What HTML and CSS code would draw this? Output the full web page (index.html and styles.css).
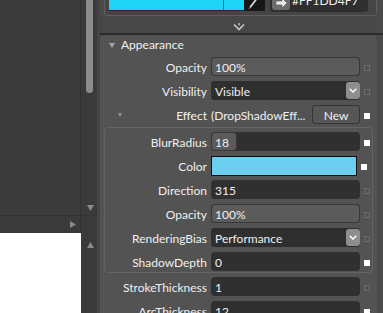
FILE: index.html
```html
<!DOCTYPE html>
<html>
<head>
<meta charset="utf-8">
<link rel="stylesheet" href="styles.css">
</head>
<body>
<div class="app">
  <div class="left">
    <div class="viewport"></div>
    <div class="vscroll">
      <div class="thumb"></div>
      <svg class="arr-down" width="7" height="6" viewBox="0 0 7 6"><polygon points="0,0 7,0 3.5,6" fill="#8a8a8a"/></svg>
    </div>
    <div class="hscroll">
      <svg width="6" height="7" viewBox="0 0 6 7"><polygon points="0,0 6,3.5 0,7" fill="#8a8a8a"/></svg>
    </div>
    <div class="corner"></div>
    <div class="canvas"></div>
    <div class="vscroll2">
      <svg width="7" height="6" viewBox="0 0 7 6"><polygon points="3.5,0 7,6 0,6" fill="#8a8a8a"/></svg>
    </div>
  </div>
  <div class="sep"></div>
  <div class="right">
    <div class="picker">
      <div class="frame">
        <div class="swatch"><div class="sw-new"></div><div class="sw-old"></div></div>
        <div class="dropper">
          <svg width="21" height="11" viewBox="0 0 21 11"><path d="M12.5 0 L6 8.5" stroke="#e6e6e6" stroke-width="1.6" fill="none"/><path d="M6 8.5 L5 10" stroke="#9a9a9a" stroke-width="1" fill="none"/></svg>
        </div>
        <div class="hex">
          <div class="hexbtn">
            <svg width="18" height="18" viewBox="0 0 18 18"><path d="M4 3 H10 V0 L15 5 L10 10 V7 H4 Z" fill="#e8e8e8" stroke="#555" stroke-width="0.6"/></svg>
          </div>
          <span class="hextxt">#FF1DD4F7</span>
        </div>
      </div>
    </div>
    <div class="expander">
      <svg width="12" height="9" viewBox="0 0 12 9"><path d="M1 2.5 L6 7.5 L11 2.5" stroke="#c8c8c8" stroke-width="1.6" fill="none"/><path d="M6 1 V3.5" stroke="#c8c8c8" stroke-width="1.4"/></svg>
    </div>
    <div class="divider"></div>
    <div class="appearance">
      <div class="hdr"><span class="tri"></span><span class="hdrtxt">Appearance</span></div>

      <div class="row">
        <div class="lbl">Opacity</div>
        <div class="fld slider"><div class="fill full">100%</div></div>
        <div class="chk"></div>
      </div>
      <div class="row">
        <div class="lbl">Visibility</div>
        <div class="fld dd"><span class="val">Visible</span><span class="ddb"><svg width="8" height="5" viewBox="0 0 8 5"><path d="M0.8 0.8 L4 4 L7.2 0.8" stroke="#f2f2f2" stroke-width="1.7" fill="none"/></svg></span></div>
        <div class="chk"></div>
      </div>
      <div class="row">
        <div class="lbl eff"><span class="tri2"></span><span>Effect</span></div>
        <div class="effcell"><span class="effval">(DropShadowEff...</span><span class="btn">New</span></div>
        <div class="chk on"></div>
      </div>

      <div class="group">
        <div class="row">
          <div class="lbl">BlurRadius</div>
          <div class="fld dark"><div class="fill part">18</div></div>
          <div class="chk on"></div>
        </div>
        <div class="row">
          <div class="lbl">Color</div>
          <div class="colorfld"></div>
          <div class="chk on"></div>
        </div>
        <div class="row">
          <div class="lbl">Direction</div>
          <div class="fld dark"><span class="val">315</span></div>
          <div class="chk"></div>
        </div>
        <div class="row">
          <div class="lbl">Opacity</div>
          <div class="fld slider"><div class="fill full">100%</div></div>
          <div class="chk"></div>
        </div>
        <div class="row">
          <div class="lbl">RenderingBias</div>
          <div class="fld dd"><span class="val">Performance</span><span class="ddb"><svg width="8" height="5" viewBox="0 0 8 5"><path d="M0.8 0.8 L4 4 L7.2 0.8" stroke="#f2f2f2" stroke-width="1.7" fill="none"/></svg></span></div>
          <div class="chk"></div>
        </div>
        <div class="row">
          <div class="lbl">ShadowDepth</div>
          <div class="fld dark"><span class="val">0</span></div>
          <div class="chk on"></div>
        </div>
      </div>

      <div class="row">
        <div class="lbl">StrokeThickness</div>
        <div class="fld dark"><span class="val">1</span></div>
        <div class="chk"></div>
      </div>
      <div class="row">
        <div class="lbl">ArcThickness</div>
        <div class="fld dark"><span class="val">12</span></div>
        <div class="chk on"></div>
      </div>
    </div>
  </div>
</div>
</body>
</html>
```

FILE: styles.css
```css
* { box-sizing: border-box; margin: 0; padding: 0; }
html, body { width: 383px; height: 313px; overflow: hidden; background: #4a4a4a; }
body { font-family: Lato, "Noto Sans", sans-serif; font-size: 12px; color: #f0f0f0; }

.app { display: flex; height: 313px; }

/* left pane */
.left {
  width: 97px;
  flex-shrink: 0;
  display: grid;
  grid-template-columns: 80px 17px;
  grid-template-rows: 215px 18px 80px;
  background: #3c3b3b;
}
.viewport { background: #3c3b3b; }
.vscroll {
  border-left: 1px solid #323131;
  background: #3b3a3a;
  display: flex;
  flex-direction: column;
  justify-content: space-between;
  align-items: flex-start;
}
.thumb { width: 7px; height: 93px; margin-left: 5px; background: #8b8b8b; border-radius: 0 0 4px 4px; }
.arr-down { margin-left: 6px; margin-bottom: 4px; display: block; }
.hscroll {
  border-top: 1px solid #323131;
  background: #3b3a3a;
  display: flex;
  justify-content: flex-end;
  align-items: center;
  padding-right: 4px;
}
.hscroll svg { display: block; }
.corner { border-top: 1px solid #323131; border-left: 1px solid #323131; background: #3b3a3a; }
.canvas { background: #ffffff; }
.vscroll2 { background: #3b3a3a; border-left: 1px solid #ffffff; padding: 9px 0 0 6px; }
.vscroll2 svg { display: block; }

.sep { width: 3px; flex-shrink: 0; background: #454545; }

/* right pane */
.right { width: 283px; flex-shrink: 0; display: flex; flex-direction: column; background: #4a4a4a; overflow: hidden; }
.right > * { flex-shrink: 0; }

.picker { height: 16px; padding: 0 6px 0 4px; }
.frame {
  height: 16px;
  overflow: hidden;
  background: #454545;
  border: 1px solid #5e5e5e;
  border-top: none;
  border-radius: 0 0 4px 4px;
  display: flex;
  align-items: flex-end;
  padding: 0 7px 3px 4px;
}
.swatch { display: flex; height: 12px; margin-bottom: 1px; border-bottom: 1px solid #262626; }
.sw-new { width: 115px; background: #1dd4f7; border-right: 1px solid #2a6a78; }
.sw-old { width: 20px; background: #1dd4f7; }
.dropper { width: 21px; height: 12px; margin-bottom: 1px; background: #161616; }
.dropper svg { display: block; }
.hex {
  width: 98px;
  height: 20px;
  margin-left: 5px;
  background: #2f2f2f;
  border-radius: 0 0 3px 3px;
  display: flex;
  align-items: flex-end;
}
.hexbtn { width: 18px; height: 18px; margin: 0 2px 2px 2px; background: #6c6c6c; border-radius: 3px; overflow: hidden; }
.hexbtn svg { display: block; margin-top: 6px; }
.hextxt { line-height: 14px; margin-bottom: 4px; color: #f0f0f0; }

.expander { height: 17px; display: flex; justify-content: center; align-items: flex-end; padding-bottom: 1px; margin-right: 6px; background: #474747; }
.expander svg { display: block; margin-bottom: 1px; }
.divider { height: 2px; background: #2c2c2c; }

.appearance {
  flex: 1 0 auto;
  margin-right: 6px;
  background: #535353;
  border-radius: 5px 5px 0 0;
}
.hdr { height: 17px; padding-top: 2px; display: flex; align-items: flex-start; }
.tri {
  width: 0; height: 0;
  margin: 6px 6px 0 9px;
  border-left: 3px solid transparent;
  border-right: 3px solid transparent;
  border-top: 5px solid #a3a3a3;
}
.hdrtxt { line-height: 15px; }

.row { display: flex; height: 19px; margin-top: 5px; line-height: 21px; white-space: nowrap; }
.lbl { width: 107px; text-align: right; }
.group .lbl { width: 102px; }
.eff { display: flex; justify-content: space-between; align-items: flex-start; }
.tri2 {
  width: 0; height: 0;
  margin: 8px 0 0 18px;
  border-left: 2.5px solid transparent;
  border-right: 2.5px solid transparent;
  border-top: 4px solid #8e8e8e;
}

.fld { width: 149px; height: 19px; margin-left: 4px; border-radius: 4px; position: relative; overflow: hidden; }
.fld.dark { background: #303030; }
.fld .val { padding-left: 4px; }
.slider { background: #303030; }
.fill { height: 19px; background: #5b5b5b; border: 1px solid #383838; border-radius: 4px; padding-left: 3px; line-height: 19px; }
.fill.full { width: 149px; }
.fill.part { width: 26px; }
.dd { background: #2f2f2f; border-radius: 3px; display: flex; justify-content: space-between; }
.ddb {
  width: 14px; height: 17px; margin-top: 1px;
  background: #8e8e8e;
  border-radius: 3px;
  display: flex; justify-content: center; align-items: center;
}
.ddb svg { display: block; }

.effcell { width: 149px; margin-left: 4px; display: flex; justify-content: space-between; }
.btn {
  width: 48px; height: 19px;
  background: #565656;
  border: 1px solid #343434;
  border-radius: 3px;
  text-align: center;
  line-height: 19px;
}

.chk { width: 6px; height: 6px; margin: 8px 0 0 4px; border: 1px solid #6c6c6c; }
.chk.on { background: #ffffff; border-color: #ffffff; }

.group {
  margin: 3px 4px 0 4px;
  padding: 0 0 1px 0;
  border: 1px solid #646464;
  border-radius: 4px;
}
.group .row:first-child { margin-top: 4px; }
.group + .row { margin-top: 4px; }

.colorfld { width: 146px; height: 20px; margin-left: 4px; background: #6dcff0; border: 1px solid #0d0d0d; }
```
